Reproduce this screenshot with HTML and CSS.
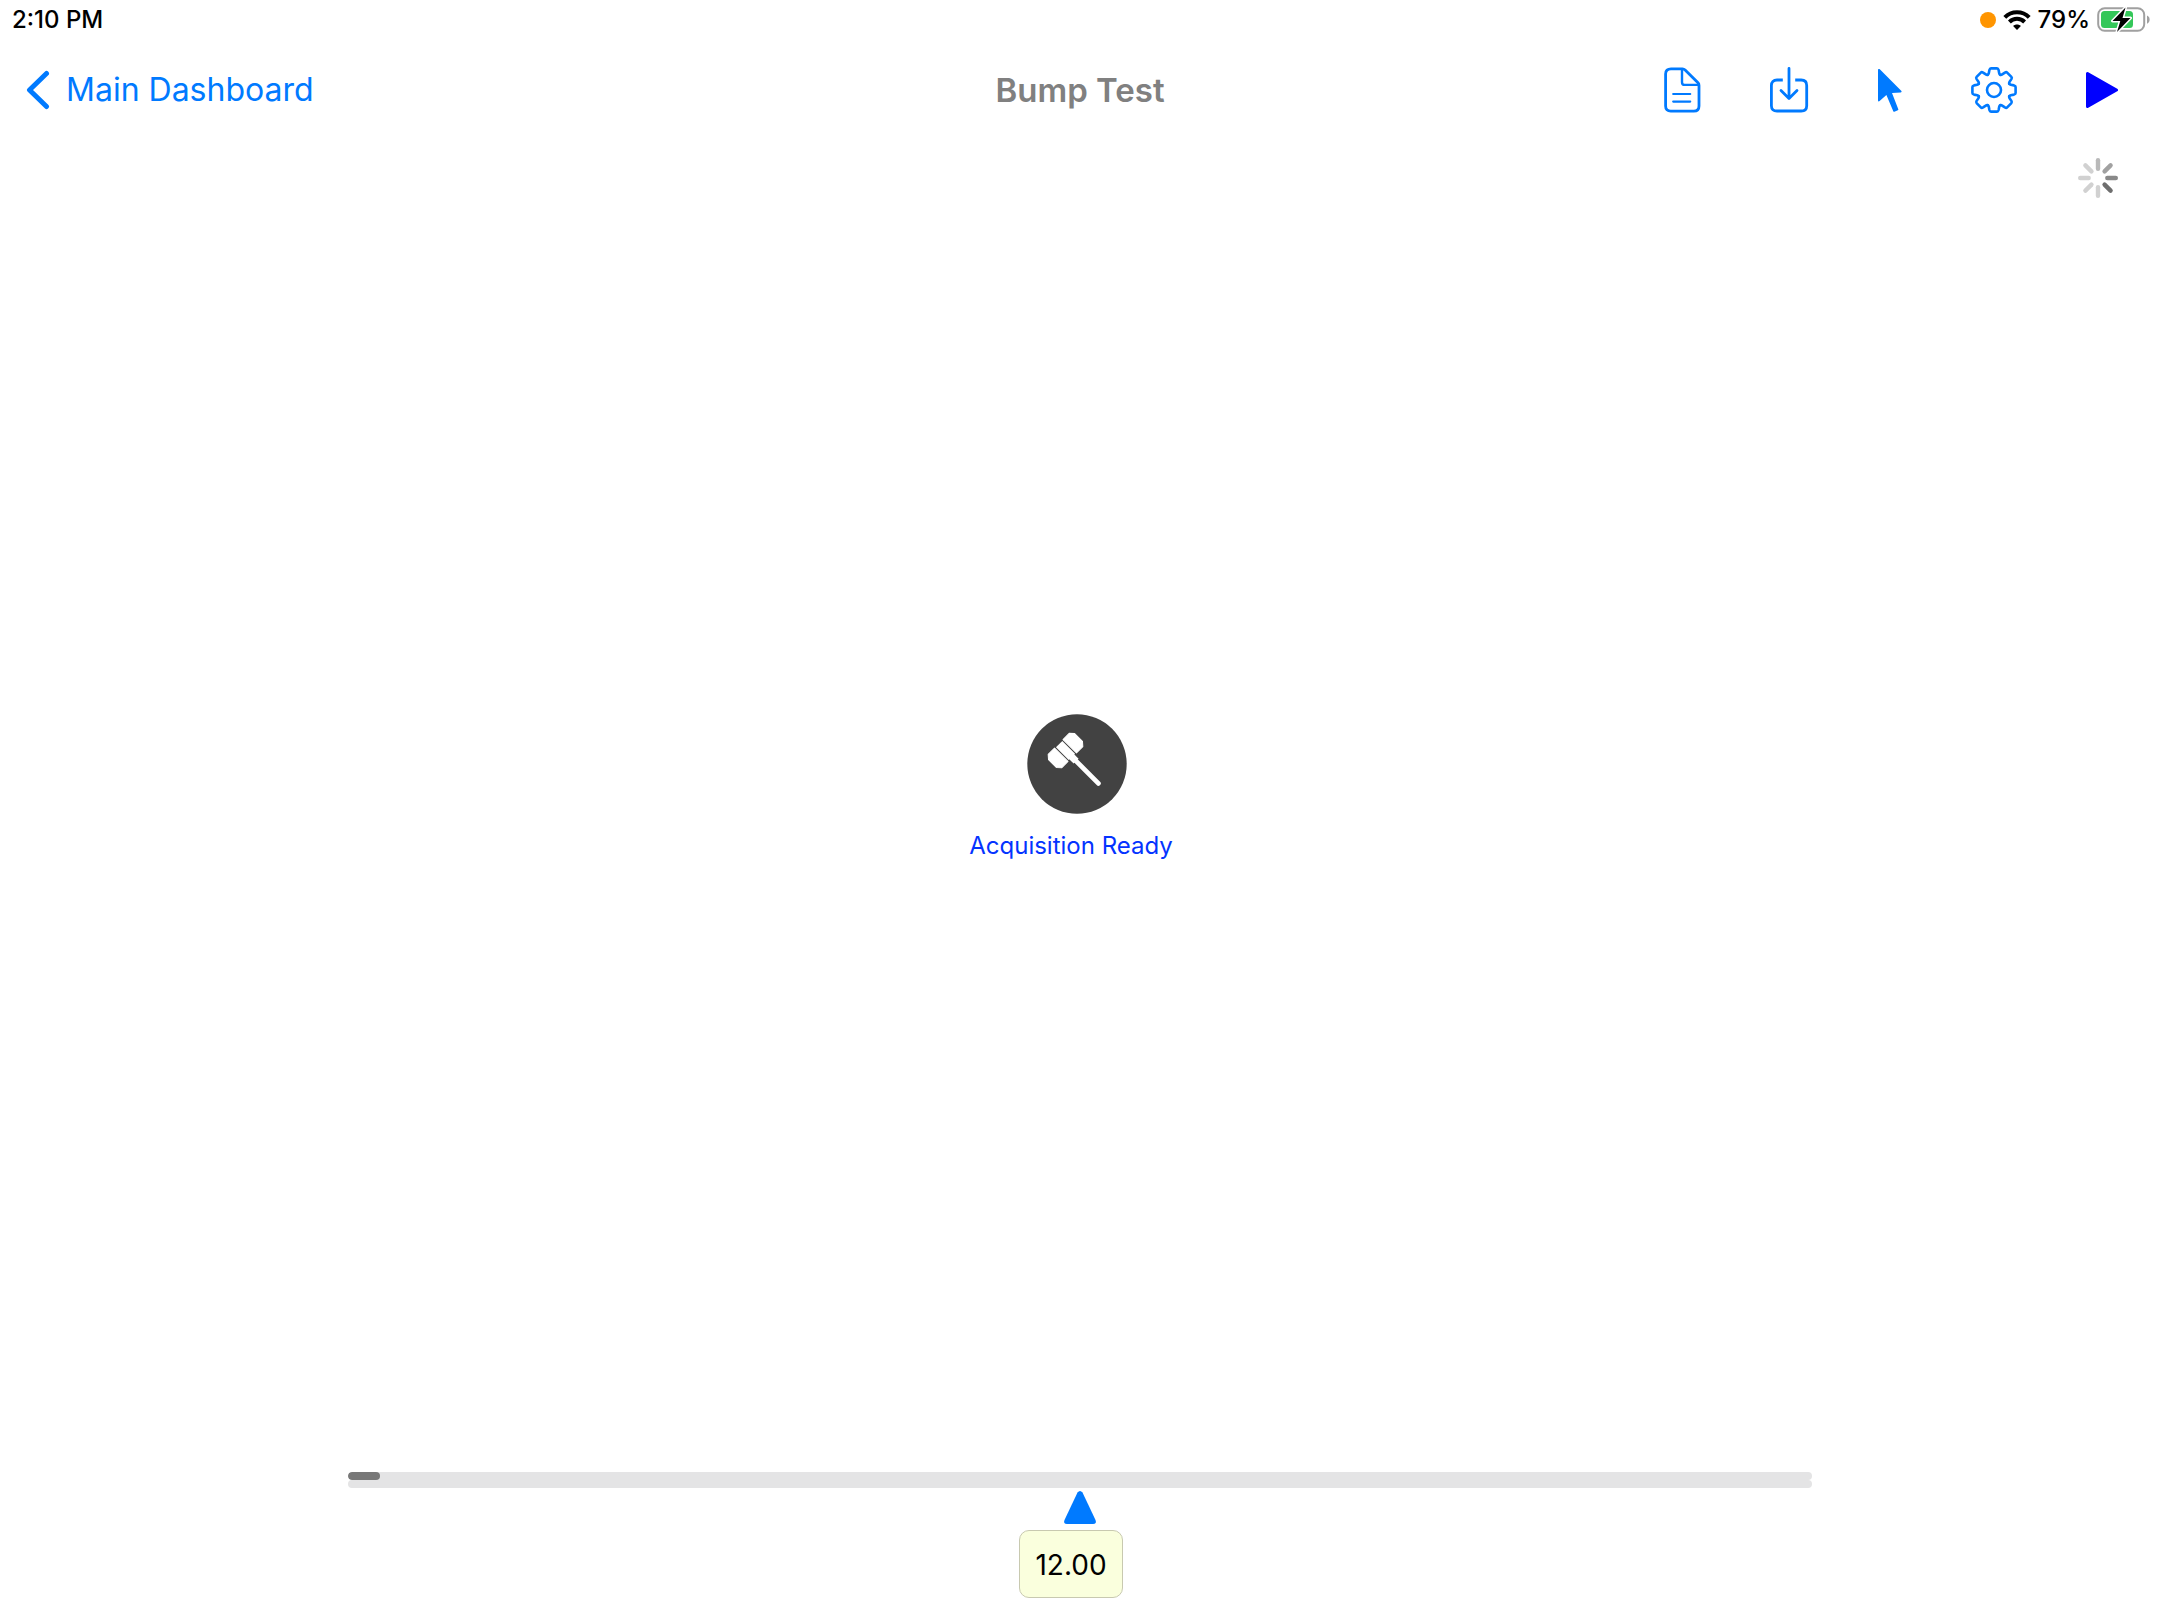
FILE: index.html
```html
<!DOCTYPE html>
<html lang="en">
<head>
<meta charset="utf-8">
<meta name="viewport" content="width=device-width, initial-scale=1">
<title>Bump Test</title>
<link rel="stylesheet" href="styles.css">
</head>
<body>
<div class="status-bar">
  <time class="status-time">2:10 PM</time>
  <div class="status-icons">
    <span class="recording-dot"></span>
    <svg class="wifi" width="28" height="20" viewBox="0 0 28 20" fill="none" stroke="#000" stroke-width="4" aria-hidden="true">
      <path d="M1.8 7.4C8.4.6 19.600.6 26.200 7.400"/>
      <path d="M6.400 12C10.600 7.800 17.400 7.800 21.600 12"/>
      <path d="M14 20l-3.900-4c2-2 5.800-2 7.800 0z" fill="#000" stroke="none"/>
    </svg>
    <span class="battery-level">79%</span>
    <svg class="battery" width="54" height="28" viewBox="0 0 54 28" aria-hidden="true">
      <rect x="1.200" y="2.200" width="46" height="22.600" rx="6.500" fill="none" stroke="#a0a0a0" stroke-width="2"/>
      <path d="M50 9.500c3.500 1.200 3.500 7 0 8.200z" fill="#a0a0a0"/>
      <rect x="4" y="5" width="32" height="17" rx="3.500" fill="#34c759"/>
      <path d="M28.500 1.500L15.500 15h7.800L20 26 33.500 12h-8z" fill="#000" stroke="#fff" stroke-width="3" paint-order="stroke" stroke-linejoin="round"/>
    </svg>
  </div>
</div>

<header class="nav-bar">
  <a class="back-link" href="#">
    <svg width="24" height="40" viewBox="0 0 24 40" fill="none" stroke="currentColor" stroke-width="5" stroke-linecap="round" stroke-linejoin="round" aria-hidden="true">
      <path d="M20.500 3.500L3.500 20l17 16.500"/>
    </svg>
    Main Dashboard
  </a>
  <h1 class="nav-title">Bump Test</h1>
  <div class="toolbar">
    <button class="tool" type="button" aria-label="Report">
      <svg width="37" height="46" viewBox="0 0 37 46" fill="none" stroke="currentColor" stroke-width="2.800" stroke-linecap="round" stroke-linejoin="round">
        <path d="M7 1.800h11.500c1.200 0 1.800.3 2.600 1.100L34 15.800c.7.700 1 1.500 1 2.600V39c0 3.400-2 5.200-5.200 5.200H6.800c-3.400 0-5.200-1.800-5.200-5.200V7C1.600 3.600 3.500 1.800 7 1.800z"/>
        <path d="M18 2.500v12.700c0 1.900.9 2.700 2.700 2.700H34.500" stroke-width="2.400"/>
        <path d="M9.200 27h17M9.200 34.600h17" stroke-width="2.200"/>
      </svg>
    </button>
    <button class="tool" type="button" aria-label="Save">
      <svg width="39" height="46" viewBox="0 0 39 46" fill="none" stroke="currentColor" stroke-width="2.800" stroke-linecap="round" stroke-linejoin="round">
        <path d="M12.800 13H7c-3.600 0-5.600 2-5.600 5.400v20.300C1.400 42.200 3.400 44 7 44h24.200c3.500 0 5.500-1.800 5.500-5.300V18.400c0-3.400-2-5.400-5.500-5.400h-6" stroke-linecap="butt"/>
        <path d="M19 1.500v29.700M11 23.500l8 8 8-8"/>
      </svg>
    </button>
    <button class="tool" type="button" aria-label="Cursor">
      <svg width="24" height="46" viewBox="0 0 24 46" fill="currentColor">
        <path d="M0 3c0-1 1-1.400 1.800-.7l21.400 21.500c.8.800.4 1.600-.6 1.600l-8.600.6 6.300 16.200c.2.500 0 .9-.5 1.100l-3.400 1.400c-.5.200-.9 0-1.100-.5L8.400 28 1.600 34c-.8.700-1.600.4-1.600-.6z"/>
      </svg>
    </button>
    <button class="tool" type="button" aria-label="Settings">
      <svg width="46" height="46" viewBox="-23 -23 46 46" fill="none" stroke="currentColor" stroke-width="2.600" stroke-linecap="round" stroke-linejoin="round">
        <path id="tooth" d="M-6.300-15.200Q-5.400-15.800-5.200-16.800L-4.600-20Q-4.200-21.600-3-21.600H3Q4.200-21.600 4.600-20L5.200-16.800Q5.400-15.800 6.300-15.200"/>
        <use href="#tooth" transform="rotate(45)"/>
        <use href="#tooth" transform="rotate(90)"/>
        <use href="#tooth" transform="rotate(135)"/>
        <use href="#tooth" transform="rotate(180)"/>
        <use href="#tooth" transform="rotate(225)"/>
        <use href="#tooth" transform="rotate(270)"/>
        <use href="#tooth" transform="rotate(315)"/>
        <circle r="7"/>
      </svg>
    </button>
    <button class="tool tool-play" type="button" aria-label="Start">
      <svg width="32" height="46" viewBox="0 0 32 46" fill="currentColor" stroke="currentColor" stroke-width="3" stroke-linejoin="round">
        <path d="M1.500 6.500v33l29-16.500z"/>
      </svg>
    </button>
  </div>
</header>

<main class="content">
  <div class="activity">
    <svg width="40" height="40" viewBox="-20 -20 40 40" stroke="#d1d1d1" stroke-width="4.400" stroke-linecap="round" role="img" aria-label="Loading">
      <path d="M0-9.300V-17.800" stroke="#b9b9b9"/>
      <path d="M0-9.300V-17.800" stroke="#a1a1a1" transform="rotate(45)"/>
      <path d="M0-9.300V-17.800" stroke="#898989" transform="rotate(90)"/>
      <path d="M0-9.300V-17.800" stroke="#6e6e6e" transform="rotate(135)"/>
      <path d="M0-9.300V-17.800" transform="rotate(180)"/>
      <path d="M0-9.300V-17.800" transform="rotate(225)"/>
      <path d="M0-9.300V-17.800" transform="rotate(270)"/>
      <path d="M0-9.300V-17.800" transform="rotate(315)"/>
    </svg>
  </div>

  <section class="stage">
    <svg width="112" height="100" viewBox="0 0 112 100" aria-hidden="true">
      <circle cx="62" cy="50" r="49.700" fill="#424242"/>
      <g fill="#fff" transform="translate(50.500 36.500) rotate(-45)">
        <path d="M-15-9.500h9v19h-9l-3.500-4v-11z" stroke="#fff" stroke-linejoin="round"/>
        <rect x="-4.500" y="-9" width="9" height="18"/>
        <path d="M15-9.500H6v19h9l3.500-4v-11z" stroke="#fff" stroke-linejoin="round"/>
        <path d="M-3.500 8h7v7h-7z"/>
        <path d="M-2.400 14h4.800v32.500a2.400 2.400 0 0 1-4.800 0z"/>
      </g>
    </svg>
    <p class="stage-label">Acquisition Ready</p>
  </section>

  <section class="timeline">
    <progress class="capture" value="32" max="1464" aria-label="Capture progress"></progress>
    <input class="position" type="range" min="0" max="24" step="0.01" value="12" aria-label="Position">
    <input class="value" type="text" value="12.00" aria-label="Position value">
  </section>
</main>
</body>
</html>
```
FILE: styles.css
```css
* {
  box-sizing: border-box;
}

body {
  margin: 0;
  min-height: 100vh;
  display: flex;
  flex-direction: column;
  background: #fff;
  color: #000;
  font-family: Inter, "Liberation Sans", sans-serif;
}

svg {
  display: block;
}

.status-bar {
  display: flex;
  align-items: center;
  justify-content: space-between;
  height: 40px;
  padding: 0 9px 0 12px;
  font-size: 24px;
  line-height: 32px;
  font-weight: 500;
}

.status-icons {
  display: flex;
  align-items: center;
  gap: 7px;
}

.recording-dot {
  width: 16px;
  height: 16px;
  border-radius: 50%;
  background: #ff9500;
}

.nav-bar {
  display: grid;
  grid-template-columns: 1fr auto 1fr;
  align-items: center;
  height: 100px;
  padding: 0 26px;
}

.back-link {
  display: flex;
  align-items: center;
  gap: 16px;
  color: #007aff;
  font-size: 32px;
  line-height: 40px;
  text-decoration: none;
}

.nav-title {
  margin: 0;
  color: #808080;
  font-size: 33px;
  line-height: 40px;
  font-weight: 600;
}

.toolbar {
  display: flex;
  justify-content: flex-end;
  gap: 69px;
  padding-right: 16px;
}

.tool {
  padding: 0;
  border: 0;
  background: none;
  color: #007aff;
}

.tool-play {
  color: #00f;
}

.content {
  flex: 1;
  display: flex;
  flex-direction: column;
}

.activity {
  display: flex;
  justify-content: flex-end;
  padding: 18px 42px 0;
}

.stage {
  flex: 1;
  display: flex;
  flex-direction: column;
  align-items: center;
  justify-content: center;
  gap: 18px;
  padding: 0 18px 96px 0;
}

.stage-label {
  margin: 0;
  color: #0433ff;
  font-size: 24px;
  line-height: 28px;
}

.timeline {
  display: flex;
  flex-direction: column;
  align-items: center;
  padding: 0 348px 22px;
}

.capture {
  appearance: none;
  display: block;
  width: 100%;
  height: 8px;
  border: 0;
  border-radius: 4px;
  overflow: hidden;
}

.capture::-webkit-progress-bar {
  background: #e4e4e5;
}

.capture::-webkit-progress-value {
  border-radius: 4px;
  background: #787878;
}

.position {
  appearance: none;
  display: block;
  width: 100%;
  height: 8px;
  margin: 0 0 42px;
  background: none;
}

.position::-webkit-slider-runnable-track {
  height: 8px;
  border-radius: 4px;
  background: #e4e4e5;
}

.position::-webkit-slider-thumb {
  appearance: none;
  width: 32px;
  height: 33px;
  margin-top: 11px;
  background: #007aff;
  clip-path: path("M13.500 1.500Q16 -1.500 18.500 1.500L31.500 29Q33 33 29 33H3Q-1 33 .5 29Z");
}

.value {
  width: 104px;
  height: 68px;
  margin: 0 18px 0 0;
  padding: 2px 0 0;
  border: 1px solid #c8c9b0;
  border-radius: 10px;
  background: #faffdd;
  color: #000;
  font: inherit;
  font-size: 28px;
  text-align: center;
}
```
